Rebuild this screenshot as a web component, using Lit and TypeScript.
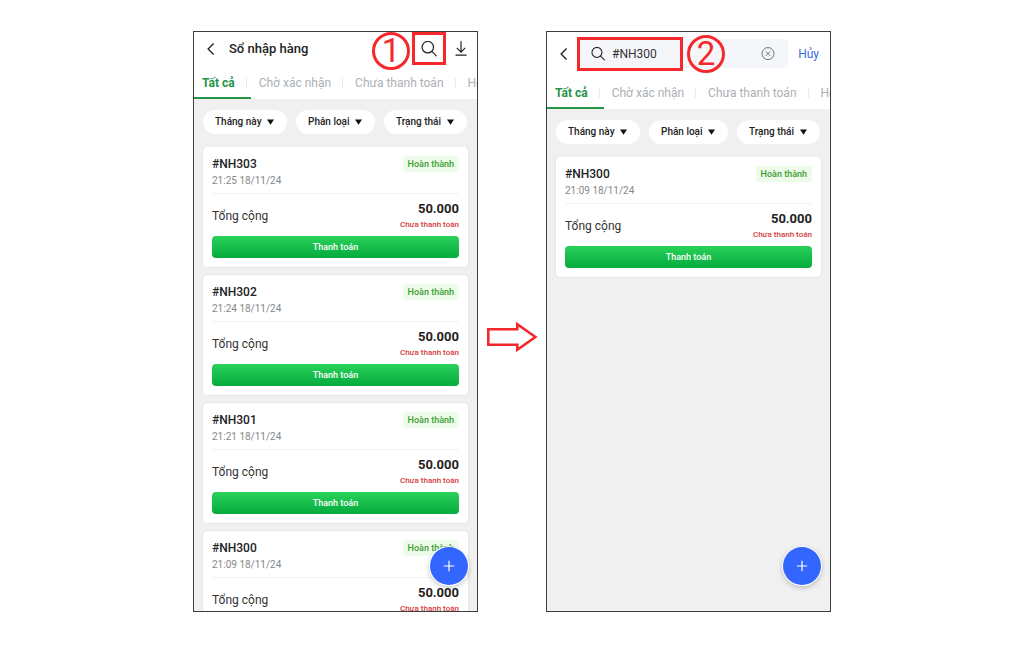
import { LitElement, html, css, nothing } from "lit";
import { customElement, property, state } from "lit/decorators.js";
import { classMap } from "lit/directives/class-map.js";

interface Receipt {
  code: string;
  time: string;
  total: string;
}

const RECEIPTS: Receipt[] = [
  { code: "#NH303", time: "21:25 18/11/24", total: "50.000" },
  { code: "#NH302", time: "21:24 18/11/24", total: "50.000" },
  { code: "#NH301", time: "21:21 18/11/24", total: "50.000" },
  { code: "#NH300", time: "21:09 18/11/24", total: "50.000" },
];

const TABS = ["Tất cả", "Chờ xác nhận", "Chưa thanh toán", "Hoàn thành"];
const FILTERS = ["Tháng này", "Phân loại", "Trạng thái"];

const backIcon = html`<svg width="8" height="14" viewBox="0 0 8 14" fill="none" stroke="#222" stroke-width="1.3" aria-hidden="true">
  <path d="M6.6 1.5 1.1 7 6.6 12.5" />
</svg>`;

const searchIcon = (size: number) => html`<svg width=${size} height=${size} viewBox="0 0 16 16" fill="none" stroke="#222" stroke-width="1.2" stroke-linecap="round" aria-hidden="true">
  <circle cx="6.8" cy="6.2" r="5.7" />
  <path d="M10.9 10.4 15.3 14.8" />
</svg>`;

const downloadIcon = html`<svg width="12" height="16" viewBox="0 0 12 16" fill="none" stroke="#222" stroke-width="1.2" aria-hidden="true">
  <path d="M6 0.2V11M1.8 6.9 6 11.1 10.2 6.9M0.5 14.2H11.5" />
</svg>`;

const clearIcon = html`<svg width="14" height="14" viewBox="0 0 14 14" fill="none" stroke="#6b7280" stroke-width="1" aria-hidden="true">
  <circle cx="7" cy="6.6" r="6" />
  <path d="M4.8 4.4 9.2 8.8M9.2 4.4 4.8 8.8" />
</svg>`;

const resets = css`
  * {
    box-sizing: border-box;
  }
  button,
  select,
  input {
    margin: 0;
    padding: 0;
    border: 0;
    background: none;
    font: inherit;
    color: inherit;
    letter-spacing: inherit;
  }
  button {
    cursor: pointer;
  }
  svg {
    display: block;
    flex: none;
  }
`;

@customElement("receipt-card")
export class ReceiptCard extends LitElement {
  @property({ attribute: false }) receipt!: Receipt;

  static styles = [
    resets,
    css`
      :host {
        display: block;
        flex: none;
        padding: 9px;
        border-radius: 4px;
        background: #fff;
        box-shadow: 0 0 2px rgba(0, 0, 0, 0.14);
      }
      .head {
        display: flex;
        justify-content: space-between;
        align-items: flex-start;
        padding-bottom: 5px;
        border-bottom: 1px solid #f3f3f3;
      }
      .code {
        margin: 0;
        font-size: 12px;
        line-height: 16px;
        font-weight: 500;
        color: #222;
      }
      .time {
        margin: 0;
        padding-top: 2px;
        font-size: 10px;
        line-height: 14px;
        color: #85888c;
      }
      .status {
        padding: 0 5px;
        border-radius: 4px;
        background: #edfbe9;
        font-size: 9px;
        line-height: 16px;
        font-weight: 500;
        color: #3c9e35;
      }
      .body {
        display: flex;
        justify-content: space-between;
        align-items: center;
        padding: 6px 0 4px;
      }
      .label {
        font-size: 12px;
        line-height: 16px;
        color: #333;
      }
      .amount {
        display: flex;
        flex-direction: column;
        align-items: flex-end;
      }
      .total {
        font-size: 13px;
        line-height: 18px;
        font-weight: 700;
        color: #222;
      }
      .unpaid {
        font-size: 8px;
        line-height: 14px;
        font-weight: 500;
        color: #d23c3c;
      }
      .pay {
        display: block;
        width: 100%;
        border-radius: 4px;
        background: linear-gradient(#2ad15a, #05ab3c);
        font-size: 9px;
        line-height: 22px;
        font-weight: 500;
        color: #fff;
      }
    `,
  ];

  render() {
    const r = this.receipt;
    return html`
      <div class="head">
        <div>
          <h2 class="code">${r.code}</h2>
          <p class="time">${r.time}</p>
        </div>
        <span class="status">Hoàn thành</span>
      </div>
      <div class="body">
        <span class="label">Tổng cộng</span>
        <div class="amount">
          <span class="total">${r.total}</span>
          <span class="unpaid">Chưa thanh toán</span>
        </div>
      </div>
      <button class="pay" type="button">Thanh toán</button>
    `;
  }
}

@customElement("phone-screen")
export class PhoneScreen extends LitElement {
  @property({ type: Boolean }) searching = false;
  @property() query = "";
  @property({ type: Number }) step = 1;
  @state() private activeTab = 0;

  static styles = [
    resets,
    css`
      :host {
        display: flex;
        flex-direction: column;
        position: relative;
        flex: 1 1 0;
        min-width: 0;
        box-sizing: border-box;
        border: 1px solid #3d3d3d;
        background: #f0f0f0;
      }
      .bar {
        display: flex;
        align-items: center;
        flex: none;
        height: 33px;
        padding: 0 10px 0 13px;
        background: #fff;
      }
      .bar.search {
        height: 43px;
        padding-right: 11px;
      }
      .title {
        flex: 1;
        margin: 0;
        padding-left: 14px;
        font-size: 13px;
        line-height: 18px;
        font-weight: 500;
        color: #222;
      }
      .tools {
        display: flex;
        align-items: center;
        gap: 18px;
      }
      .field {
        display: flex;
        align-items: center;
        flex: 1;
        min-width: 0;
        height: 29px;
        margin: 0 10px 0 10px;
        padding: 0 13px;
        border-radius: 4px;
        background: #f5f6f9;
      }
      .field input {
        flex: 1;
        min-width: 0;
        padding: 0 7px;
        outline: none;
        font-size: 12px;
        line-height: 16px;
        color: #333;
      }
      .cancel {
        font-size: 12px;
        line-height: 16px;
        color: #3b68e6;
      }
      .tabs {
        display: flex;
        flex: none;
        height: 34px;
        overflow: hidden;
        background: #fff;
        font-size: 12px;
        line-height: 16px;
        color: #adb0b4;
        white-space: nowrap;
      }
      .tab {
        display: flex;
        align-items: center;
        flex: none;
        gap: 11px;
        padding: 3px 0 0 12px;
        border-bottom: 2px solid transparent;
      }
      .tab::after {
        content: "";
        width: 1px;
        height: 10px;
        background: #ececec;
      }
      .tab:first-child {
        padding-left: 8px;
      }
      .tab.active {
        padding-right: 4px;
        border-color: #249447;
        font-weight: 700;
        color: #249447;
      }
      .tab.active + .tab {
        padding-left: 8px;
      }
      .filters {
        display: flex;
        justify-content: space-between;
        flex: none;
        padding: 11px 10px 13px 9px;
      }
      .filter {
        display: flex;
        align-items: center;
        gap: 5px;
        height: 24px;
        padding: 0 13px 0 12px;
        border-radius: 12px;
        background: #fff;
        font-size: 10px;
        line-height: 14px;
        font-weight: 500;
        color: #222;
      }
      .filter select {
        appearance: none;
        outline: none;
      }
      .list {
        display: flex;
        flex-direction: column;
        flex: 1;
        min-height: 0;
        gap: 8px;
        padding: 0 9px;
        overflow: hidden;
      }
      .fab {
        position: absolute;
        right: 9px;
        bottom: 26px;
        display: grid;
        place-items: center;
        width: 38px;
        height: 38px;
        border-radius: 50%;
        background: #3366ff;
        box-shadow: 0 0 0 1px #fff, 0 2px 5px 1px rgba(0, 0, 0, 0.2);
      }
      .mark {
        position: absolute;
        border: 3px solid #f5282b;
        pointer-events: none;
      }
      .box1 {
        top: 0;
        right: 31px;
        width: 34px;
        height: 33px;
      }
      .box2 {
        top: 5px;
        left: 30px;
        width: 106px;
        height: 34px;
      }
      .step {
        display: grid;
        place-items: center;
        width: 38px;
        height: 38px;
        border-radius: 50%;
        font-size: 33px;
        line-height: 32px;
        font-weight: 400;
        color: #f5282b;
      }
      .step1 {
        top: 0;
        right: 67px;
      }
      .step2 {
        top: 3px;
        left: 140px;
      }
    `,
  ];

  private renderBar() {
    if (!this.searching) {
      return html`<header class="bar">
        <button type="button" aria-label="Quay lại">${backIcon}</button>
        <h1 class="title">Sổ nhập hàng</h1>
        <div class="tools">
          <button type="button" aria-label="Tìm kiếm">${searchIcon(16)}</button>
          <button type="button" aria-label="Tải xuống">${downloadIcon}</button>
        </div>
      </header>`;
    }
    return html`<header class="bar search">
      <button type="button" aria-label="Quay lại">${backIcon}</button>
      <div class="field">
        ${searchIcon(14)}
        <input
          type="text"
          aria-label="Tìm kiếm"
          .value=${this.query}
          @input=${(e: Event) => (this.query = (e.target as HTMLInputElement).value)}
        />
        <button type="button" aria-label="Xóa" @click=${() => (this.query = "")}>${clearIcon}</button>
      </div>
      <button class="cancel" type="button">Hủy</button>
    </header>`;
  }

  render() {
    const items = RECEIPTS.filter((r) => r.code.includes(this.query));
    return html`
      ${this.renderBar()}
      <nav class="tabs">
        ${TABS.map(
          (name, i) => html`<button
            type="button"
            class=${classMap({ tab: true, active: i === this.activeTab })}
            @click=${() => (this.activeTab = i)}
          >${name}</button>`
        )}
      </nav>
      <div class="filters">
        ${FILTERS.map(
          (name) => html`<label class="filter">
            <select aria-label=${name}><option>${name}</option></select>
            <svg width="7" height="6" viewBox="0 0 7 6" aria-hidden="true"><path d="M0 0.5H7L3.5 5.8Z" fill="#111" /></svg>
          </label>`
        )}
      </div>
      <main class="list">
        ${items.map((r) => html`<receipt-card .receipt=${r}></receipt-card>`)}
      </main>
      <button class="fab" type="button" aria-label="Thêm">
        <svg width="12" height="12" viewBox="0 0 12 12" stroke="#fff" stroke-width="1.2" aria-hidden="true"><path d="M6 0.8V11.2M0.8 6H11.2" /></svg>
      </button>
      ${this.step
        ? html`<div class="mark box${this.step}"></div>
            <div class="mark step step${this.step}">${this.step}</div>`
        : nothing}
    `;
  }
}

@customElement("app-root")
export class AppRoot extends LitElement {
  static styles = [
    resets,
    css`
      :host {
        display: block;
        background: #fff;
        font-family: Roboto, "Noto Sans", sans-serif;
      }
      .page {
        display: flex;
        justify-content: center;
        height: 100vh;
        min-height: 400px;
        padding: 31px 16px 35px;
      }
      .flow {
        display: flex;
        flex: 1;
        max-width: 638px;
      }
      .next {
        display: flex;
        align-items: center;
        justify-content: center;
        flex: none;
        padding: 30px 8px 0;
      }
    `,
  ];

  render() {
    return html`<div class="page">
      <div class="flow">
        <phone-screen step="1"></phone-screen>
        <div class="next">
          <svg width="52" height="34" viewBox="0 0 52 34" fill="none" stroke="#f5282b" stroke-width="2.6" aria-hidden="true">
            <path d="M2.3 9.3H31.3V4.2L49.4 17 31.3 29.8V24.7H2.3Z" />
          </svg>
        </div>
        <phone-screen step="2" searching query="#NH300"></phone-screen>
      </div>
    </div>`;
  }
}
